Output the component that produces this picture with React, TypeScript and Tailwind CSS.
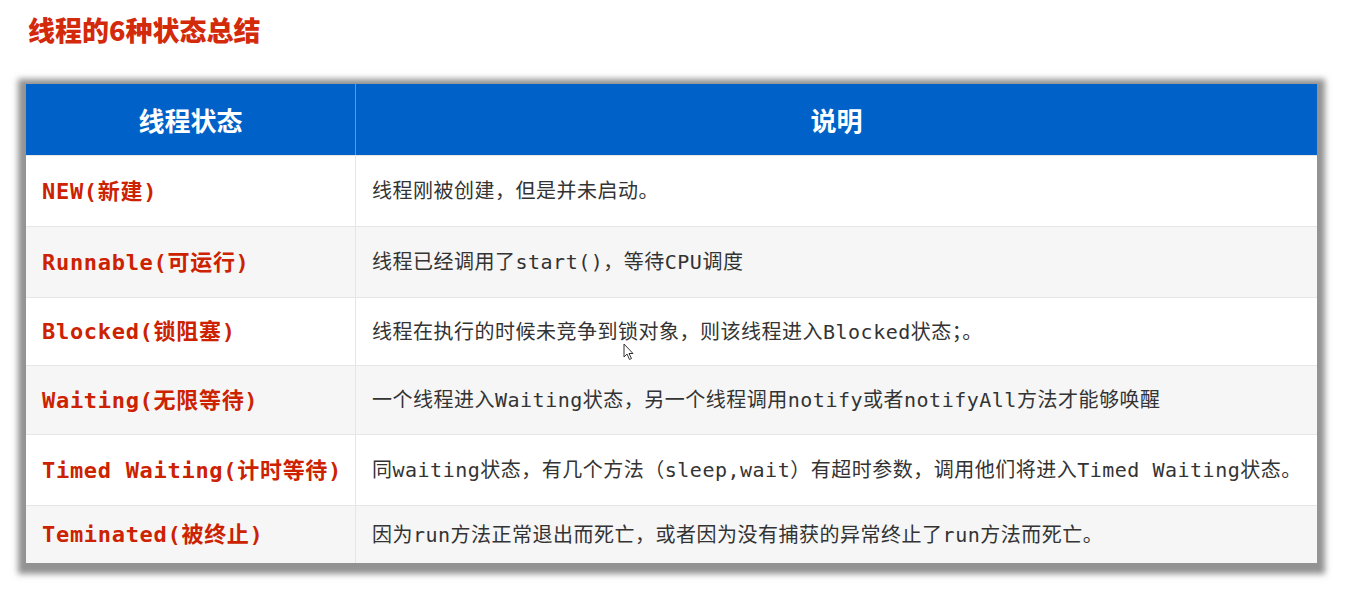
const ROWS = [
  { state: "NEW(新建)", desc: "线程刚被创建，但是并未启动。", h: "h-[71px]", bg: "bg-white" },
  { state: "Runnable(可运行)", desc: "线程已经调用了start()，等待CPU调度", h: "h-[71px]", bg: "bg-[#f6f6f6]" },
  { state: "Blocked(锁阻塞)", desc: "线程在执行的时候未竞争到锁对象，则该线程进入Blocked状态；。", h: "h-[68px]", bg: "bg-white" },
  { state: "Waiting(无限等待)", desc: "一个线程进入Waiting状态，另一个线程调用notify或者notifyAll方法才能够唤醒", h: "h-[69px]", bg: "bg-[#f6f6f6]" },
  { state: "Timed Waiting(计时等待)", desc: "同waiting状态，有几个方法（sleep,wait）有超时参数，调用他们将进入Timed Waiting状态。", h: "h-[71px]", bg: "bg-white" },
  { state: "Teminated(被终止)", desc: "因为run方法正常退出而死亡，或者因为没有捕获的异常终止了run方法而死亡。", h: "h-[58px]", bg: "bg-[#f6f6f6]" },
];

const mono = "font-['DejaVu_Sans_Mono','Noto_Sans_CJK_SC',monospace]";

export default function App() {
  return (
    <div className="relative w-[1350px] h-[590px] bg-white overflow-hidden font-['Noto_Sans_CJK_SC',sans-serif]">
      <h1 className="pl-[28px] pt-[13px] h-[84px] text-[27px] leading-[34px] font-black text-[#d42a0c]">
        线程的6种状态总结
      </h1>

      <div className="ml-[26px] w-[1291px] shadow-[0_3px_6px_8px_rgba(110,110,110,0.75)]">
        <div className="flex h-[71px] bg-[#0062c9] text-white text-[26px] font-bold">
          <div className="w-[330px] flex items-center justify-center border-r border-[#5a9ae0]">线程状态</div>
          <div className="flex-1 flex items-center justify-center">说明</div>
        </div>
        {ROWS.map((r) => (
          <div key={r.state} className={`flex ${r.h} ${r.bg} border-t border-[#e6e6e6]`}>
            <div
              className={`w-[330px] flex items-center pl-[16px] border-r border-[#e6e6e6] text-[22px] tracking-[0.7px] font-bold text-[#cc2200] ${mono}`}
            >
              {r.state}
            </div>
            <div className={`flex-1 flex items-center pl-[16px] text-[20px] tracking-[0.5px] text-[#333333] ${mono}`}>
              {r.desc}
            </div>
          </div>
        ))}
      </div>

      {/* mouse pointer */}
      <svg className="absolute left-[623px] top-[343px]" width="12" height="18" viewBox="0 0 12 18">
        <path d="M1 1 L1 14 L4 11 L6.5 16.5 L8.5 15.5 L6 10.5 L10 10.5 Z" fill="white" stroke="#333" strokeWidth="1" strokeLinejoin="round" />
      </svg>
    </div>
  );
}
